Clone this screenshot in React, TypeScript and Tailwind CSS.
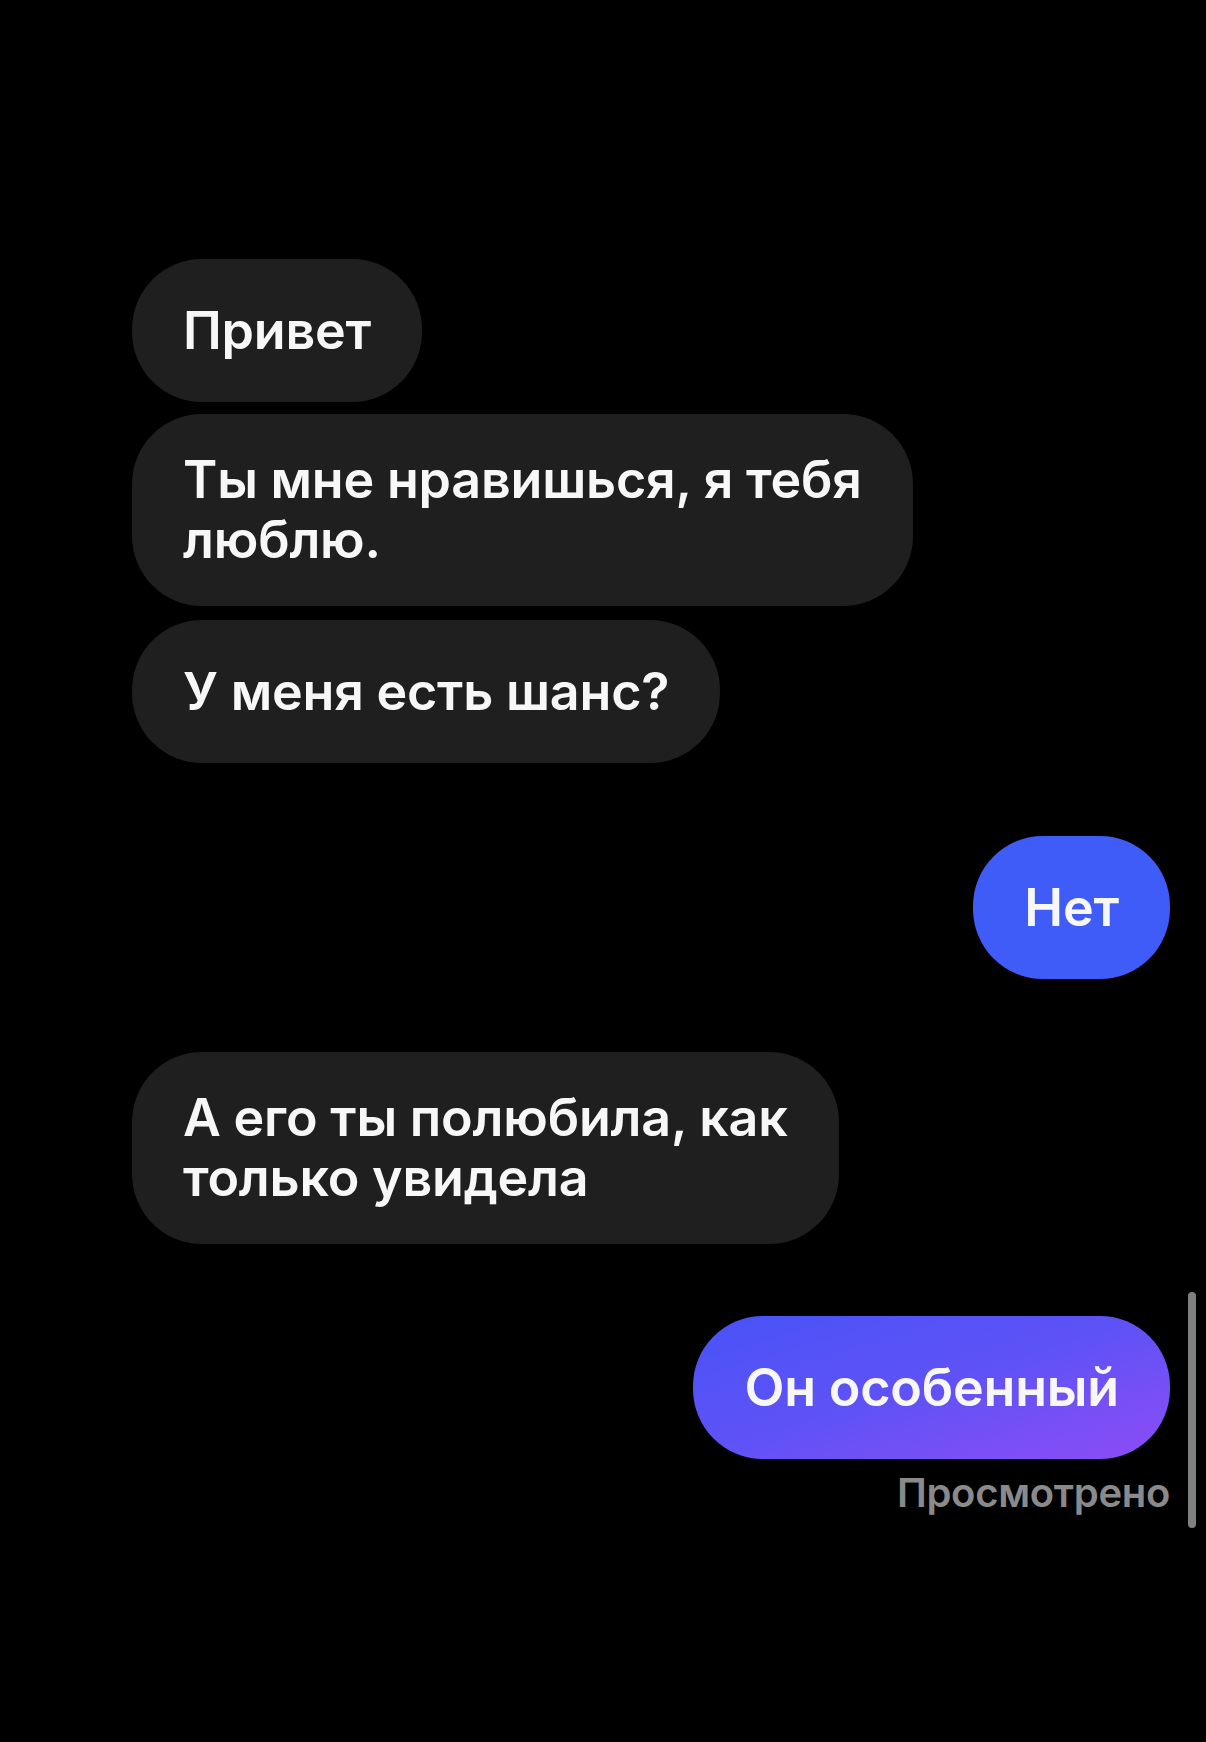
type Message = {
  id: number;
  text: string;
  mine?: boolean;
  gradient?: boolean;
  gapTop: string;
};

const messages: Message[] = [
  { id: 1, text: 'Привет', gapTop: 'mt-0' },
  { id: 2, text: 'Ты мне нравишься, я тебя\nлюблю.', gapTop: 'mt-[12px]' },
  { id: 3, text: 'У меня есть шанс?', gapTop: 'mt-[14px]' },
  { id: 4, text: 'Нет', mine: true, gapTop: 'mt-[73px]' },
  { id: 5, text: 'А его ты полюбила, как\nтолько увидела', gapTop: 'mt-[73px]' },
  { id: 6, text: 'Он особенный', mine: true, gradient: true, gapTop: 'mt-[72px]' },
];

function Bubble({ message }: { message: Message }) {
  const tone = message.mine
    ? message.gradient
      ? 'bg-gradient-to-br from-[#4753f7] via-[#5f52f6] to-[#8d4bf5]'
      : 'bg-[#3f5cf8]'
    : 'bg-[#1f1f1f]';

  return (
    <div
      className={`${message.gapTop} ${message.mine ? 'self-end' : 'self-start'} ${tone} flex min-h-[143px] items-center whitespace-pre-line rounded-[70px] px-[51px] py-9 text-[52px] font-semibold leading-[60px] tracking-[-0.2px] text-[#f7f7f7]`}
    >
      {message.text}
    </div>
  );
}

export default function App() {
  return (
    <div className="relative min-h-[1742px] w-full bg-black font-['Inter','Noto_Sans',sans-serif]">
      <div className="flex flex-col pl-[132px] pr-[36px] pt-[259px]">
        {messages.map((m) => (
          <Bubble key={m.id} message={m} />
        ))}
        <span className="mt-[10px] self-end text-[40px] font-semibold leading-[48px] tracking-[-0.3px] text-[#8a8a8a]">
          Просмотрено
        </span>
      </div>

      {/* scroll indicator */}
      <div className="absolute left-[1188px] top-[1292px] h-[236px] w-[8px] rounded-full bg-[#808080]" />
    </div>
  );
}
